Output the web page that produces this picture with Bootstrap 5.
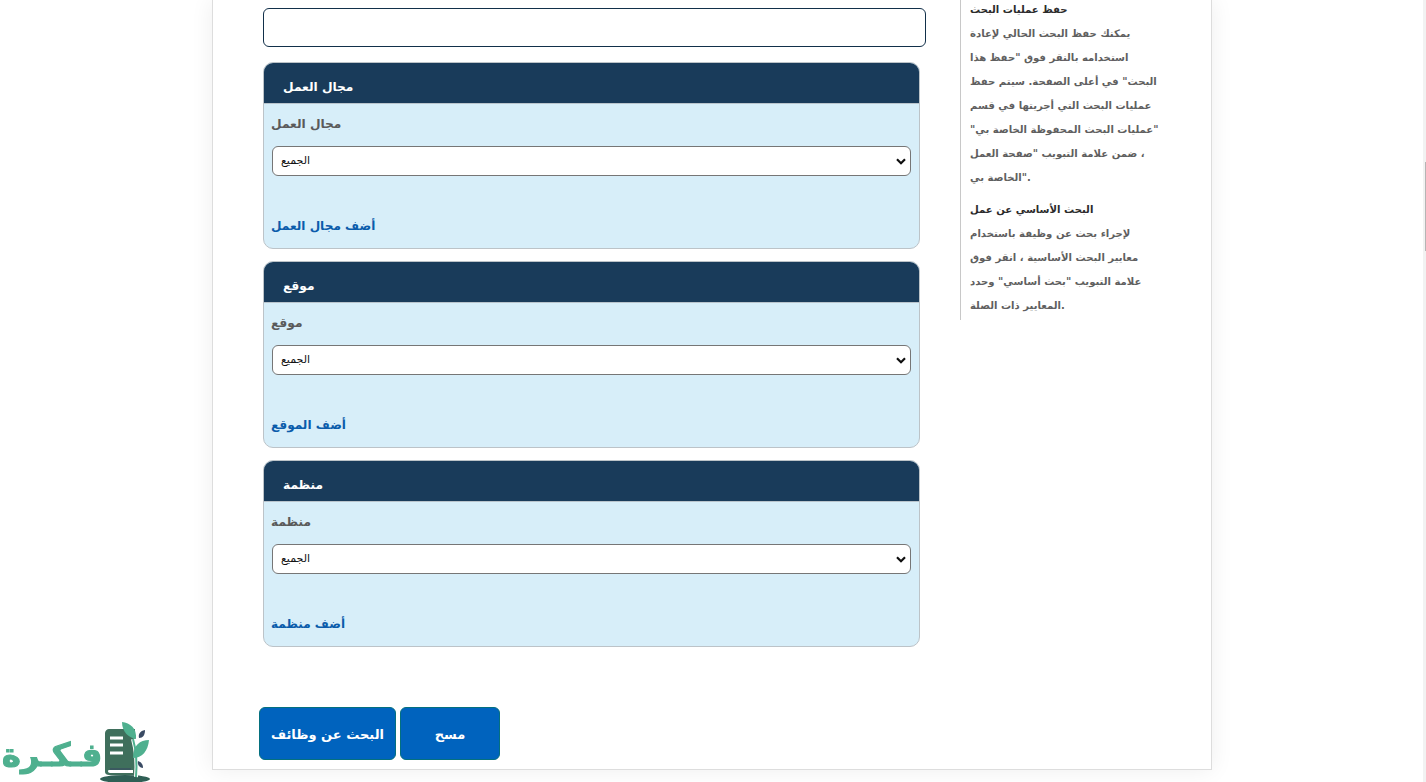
<!DOCTYPE html>
<html lang="ar">
<head>
<meta charset="utf-8">
<title>البحث عن وظائف</title>
<link href="https://cdn.jsdelivr.net/npm/bootstrap@5.3.0/dist/css/bootstrap.min.css" rel="stylesheet">
<style>
html,body{height:782px;overflow:hidden;background:#fff;font-family:"DejaVu Sans",sans-serif;}
.shell{width:1000px;height:770px;margin-left:212px;background:#fff;border:1px solid #ddd;border-top:0;box-shadow:0 0 22px rgba(0,0,0,.07);}
.main-col{width:747px;padding-left:50px;padding-top:8px;position:relative;}
.side-col{width:240px;height:320px;border-left:1px solid #c8c8c8;padding:1px 0 0 9px;font-size:10.1px;font-weight:700;color:#5f5f5f;line-height:24px;white-space:nowrap;}
.side-head{color:#2b2b2b;line-height:18px;margin:0 0 3px;font-size:10.1px;font-weight:700;}
.side-head.next{margin-top:11px;}
.keyword-box{width:663px;height:39px;border:1px solid #12304a;border-radius:6px;margin-bottom:15px;}
.filter-panel{width:657px;height:187px;margin-bottom:12px;background:#d7eef9;border:1px solid #bcc3c8;border-radius:10px;overflow:hidden;}
.filter-panel .card-header{height:41px;background:#193b5a;color:#fff;font-size:12.2px;font-weight:700;padding:16px 0 0 19px;line-height:16px;border:0;border-radius:0;border-bottom:1px solid #b9c4cc;}
.filter-panel .card-body{padding:10px 8px 0 7px;}
.field-label{font-size:12.2px;font-weight:700;color:#5a5a5a;line-height:20px;margin-bottom:12px;}
.filter-panel .form-select{height:30px;width:639px;margin-left:1px;padding:0 0 0 8px;font-size:11px;font-family:"DejaVu Sans",sans-serif;color:#111;border:1px solid #767676;border-radius:6px;background-image:url("data:image/svg+xml,%3csvg xmlns='http://www.w3.org/2000/svg' viewBox='0 0 10 7'%3e%3cpath fill='none' stroke='%23111' stroke-width='2.2' d='M1 1.2l4 4 4-4'/%3e%3c/svg%3e");background-size:10px 7px;background-position:right 4px center;}
.add-link{display:block;margin-top:40px;font-size:12.1px;font-weight:700;color:#0b5cab;line-height:20px;text-decoration:none;}
.action-row{margin-top:60px;margin-left:-4px;gap:4px;}
.action-btn{height:53px;background:#0063be;border:1px solid #04707f;border-radius:6px;color:#fff;font-size:13px;font-weight:700;padding:3px 0 0;}
.action-btn.wide{width:137px;}
.action-btn.narrow{width:100px;}
.site-logo{position:fixed;left:0;bottom:0;width:152px;height:62px;}
.logo-word{position:absolute;left:2px;bottom:2px;font-size:32px;line-height:50px;font-weight:700;color:#4fb08f;-webkit-text-stroke:1.2px #4fb08f;white-space:nowrap;}
.site-logo svg{position:absolute;left:100px;top:0;}
.scroll-rail{position:fixed;right:0;top:0;width:3px;height:782px;background:#f2f2f2;padding-top:162px;}
.scroll-thumb{width:1px;height:89px;margin-left:2px;background:#b5b5b5;}
</style>
</head>
<body>
<div class="shell d-flex">
  <div class="main-col">
    <input class="keyword-box form-control" type="text" aria-label="كلمات">
    <div class="card filter-panel">
      <div class="card-header">مجال العمل</div>
      <div class="card-body">
        <div class="field-label">مجال العمل</div>
        <select class="form-select"><option>الجميع</option></select>
        <a class="add-link" href="#">أضف مجال العمل</a>
      </div>
    </div>
    <div class="card filter-panel">
      <div class="card-header">موقع</div>
      <div class="card-body">
        <div class="field-label">موقع</div>
        <select class="form-select"><option>الجميع</option></select>
        <a class="add-link" href="#">أضف الموقع</a>
      </div>
    </div>
    <div class="card filter-panel">
      <div class="card-header">منظمة</div>
      <div class="card-body">
        <div class="field-label">منظمة</div>
        <select class="form-select"><option>الجميع</option></select>
        <a class="add-link" href="#">أضف منظمة</a>
      </div>
    </div>
    <div class="d-flex action-row">
      <button class="btn action-btn wide">البحث عن وظائف</button>
      <button class="btn action-btn narrow">مسح</button>
    </div>
  </div>
  <aside class="side-col">
    <div class="side-head">حفظ عمليات البحث</div>
    <div>يمكنك حفظ البحث الحالي لإعادة</div>
    <div>استخدامه بالنقر فوق "حفظ هذا</div>
    <div>البحث" في أعلى الصفحة. سيتم حفظ</div>
    <div>عمليات البحث التي أجريتها في قسم</div>
    <div>"عمليات البحث المحفوظة الخاصة بي"</div>
    <div>&#x200F;، ضمن علامة التبويب "صفحة العمل</div>
    <div>الخاصة بي".</div>
    <div class="side-head next">البحث الأساسي عن عمل</div>
    <div>لإجراء بحث عن وظيفة باستخدام</div>
    <div>معايير البحث الأساسية ، انقر فوق</div>
    <div>علامة التبويب "بحث أساسي" وحدد</div>
    <div>المعايير ذات الصلة.</div>
  </aside>
</div>
<div class="site-logo">
  <span class="logo-word">فـكـرة</span>
  <svg width="52" height="62" viewBox="0 0 52 62">
    <ellipse cx="25" cy="59" rx="25" ry="4" fill="#2f5f55"/>
    <path d="M9 9h26v46H9c-2 0-4-1-4-3V13c0-2 2-4 4-4z" fill="#3f6f5c"/>
    <path d="M8 50h25v3H10c-1 0-2-1-2-1.500S9 50 8 50z" fill="#fff"/>
    <path d="M10 49h21" stroke="#3a4a63" stroke-width="1.200"/>
    <path d="M10 18h13M10 25h13M10 33h13" stroke="#fff" stroke-width="2.800"/>
    <path d="M36 57c1-12 1-24-3-38" fill="none" stroke="#fff" stroke-width="4"/>
    <path d="M36 57c1-12 1-24-3-38" fill="none" stroke="#4fb08f" stroke-width="2"/>
    <path d="M22 2c8 1 15 6 14 17-7-1-14-7-14-17z" fill="#4fb08f"/>
    <path d="M49 20c-9 0-16 5-16 18 9 0 15-7 16-18z" fill="#4fb08f"/>
    <path d="M45 10c-5 1-7 4-6 8 4 0 6-3 6-8z" fill="#3a4a63"/>
    <path d="M38 41c3 1 5 3 5 7-3 0-6-3-5-7z" fill="#3a4a63"/>
  </svg>
</div>
<div class="scroll-rail"><div class="scroll-thumb"></div></div>
<script src="https://cdn.jsdelivr.net/npm/bootstrap@5.3.0/dist/js/bootstrap.bundle.min.js"></script>
</body>
</html>
